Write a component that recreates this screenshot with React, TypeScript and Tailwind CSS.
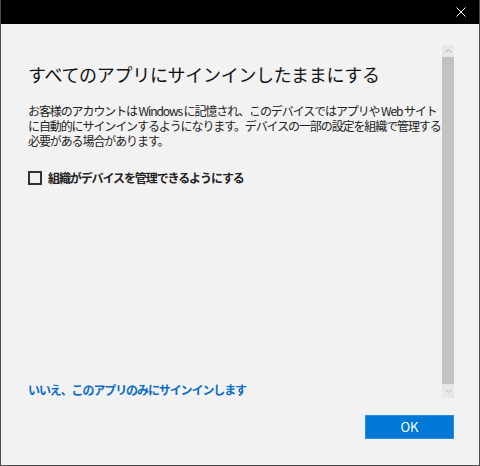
// Boîte de dialogue Windows « rester connecté à toutes les applications »
const font = "font-['Noto_Sans_CJK_JP','Noto_Sans',sans-serif]"

function CloseGlyph() {
  return (
    <svg width="10" height="10" viewBox="0 0 10 10" className="text-white">
      <path d="M0.5 0.5 L9.5 9.5 M9.5 0.5 L0.5 9.5" stroke="currentColor" strokeWidth="1" />
    </svg>
  )
}

function ScrollBar() {
  return (
    <div className="flex w-[12px] shrink-0 flex-col bg-[#e8e8e8]">
      <div className="flex h-[12px] items-center justify-center">
        <svg width="7" height="4" viewBox="0 0 7 4">
          <path d="M0.5 3.5 L3.5 0.5 L6.5 3.5" fill="none" stroke="#a6a6a6" strokeWidth="1" />
        </svg>
      </div>
      <div className="flex-1 bg-[#c2c2c2]" />
      <div className="flex h-[14px] items-center justify-center">
        <svg width="7" height="4" viewBox="0 0 7 4">
          <path d="M0.5 0.5 L3.5 3.5 L6.5 0.5" fill="none" stroke="#bdbdbd" strokeWidth="1" />
        </svg>
      </div>
    </div>
  )
}

export default function App() {
  return (
    <div className={`flex h-[466px] w-[480px] flex-col border-x border-b border-[#4a4a4a] bg-[#f2f2f2] ${font}`}>
      <div className="flex h-[24px] shrink-0 items-center justify-end bg-black pr-[13px]">
        <CloseGlyph />
      </div>

      <div className="flex h-[374px] shrink-0 pt-[21px] pl-[27px] pr-[25px]">
        <div className="flex min-w-0 flex-1 flex-col overflow-hidden">
          <h1 className="mt-[16px] whitespace-nowrap text-[18px] leading-[26px] font-normal tracking-[-0.3px] text-[#111]">
            すべてのアプリにサインインしたままにする
          </h1>
          <p className="mt-[16px] whitespace-nowrap text-[12px] leading-[15px] tracking-[-1.1px] text-[#222]">
            お客様のアカウントは Windows に記憶され、このデバイスではアプリや Web サイト
            <br />
            に自動的にサインインするようになります。デバイスの一部の設定を組織で管理する
            <br />
            必要がある場合があります。
          </p>
          <label className="mt-[20px] flex h-[20px] items-center gap-[6px]">
            <span className="h-[14px] w-[14px] shrink-0 border-2 border-[#333]" />
            <span className="whitespace-nowrap text-[12px] font-bold tracking-[-1.1px] text-[#222]">
              組織がデバイスを管理できるようにする
            </span>
          </label>
          <div className="flex-1" />
          <a className="whitespace-nowrap text-[12px] leading-[16px] font-bold tracking-[-1.1px] text-[#0a6cc4]">
            いいえ、このアプリのみにサインインします
          </a>
        </div>
        <ScrollBar />
      </div>

      <div className="flex justify-end pt-[17px] pr-[25px]">
        <button
          type="button"
          className="h-[24px] w-[89px] border border-[#2a8be0] bg-[#0078d7] text-[13px] text-white"
        >
          OK
        </button>
      </div>
    </div>
  )
}
